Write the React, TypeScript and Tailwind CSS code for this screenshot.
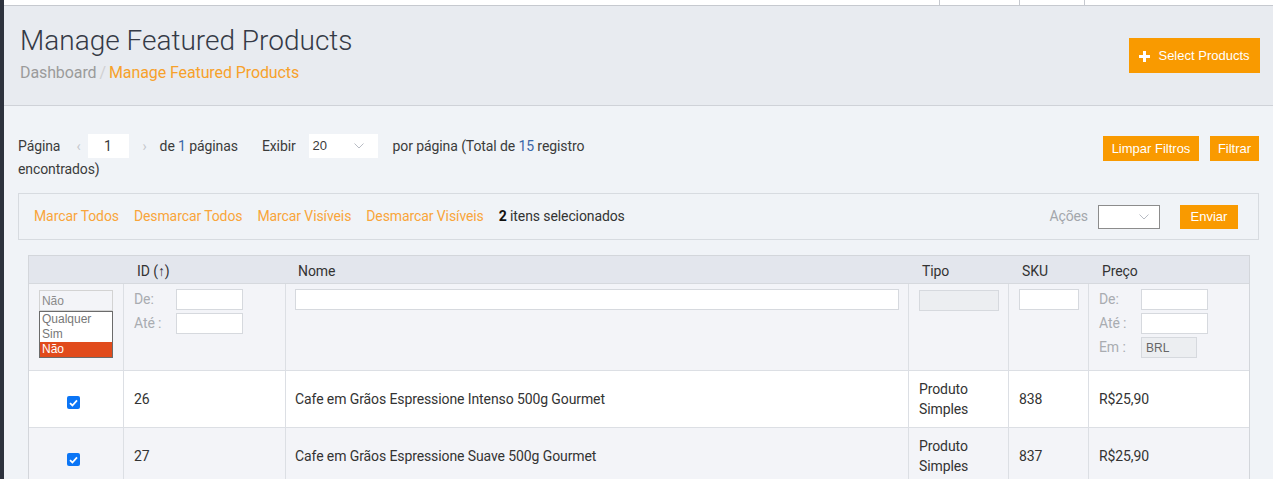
import React from "react";

const roboto = { fontFamily: "Roboto, 'Noto Sans', sans-serif" };
const arial = { fontFamily: "'Liberation Sans', Arial, sans-serif" };

function Chevron({ className = "" }: { className?: string }) {
  return (
    <svg width="10" height="6" viewBox="0 0 10 6" className={className}>
      <path d="M0.5 0.5 L5 5 L9.5 0.5" fill="none" stroke="#b8bcc4" strokeWidth="1" />
    </svg>
  );
}

function Checkbox() {
  return (
    <span className="inline-flex h-[13px] w-[13px] items-center justify-center rounded-[2px] bg-[#0b75f5]">
      <svg width="9" height="8" viewBox="0 0 9 8">
        <path d="M1 4.2 L3.4 6.5 L8 1.3" fill="none" stroke="#fff" strokeWidth="1.8" />
      </svg>
    </span>
  );
}

function Btn({ children, className = "" }: { children: React.ReactNode; className?: string }) {
  return (
    <div
      className={`flex items-center justify-center bg-[#f99a00] text-[13px] tracking-normal text-white ${className}`}
      style={arial}
    >
      {children}
    </div>
  );
}

const inputCls = "h-[21px] border border-[#d6d9de] bg-white";

export default function App() {
  const rows = [
    { id: "26", name: "Cafe em Grãos Espressione Intenso 500g Gourmet", sku: "838", bg: "bg-white" },
    { id: "27", name: "Cafe em Grãos Espressione Suave 500g Gourmet", sku: "837", bg: "bg-[#f3f4f8]" },
  ];
  return (
    <div className="flex h-[479px] w-[1273px] overflow-hidden bg-[#f0f3f7] tracking-[-0.1px] text-[#333]" style={roboto}>
      <div className="w-[4px] shrink-0 bg-[#2d323d]" />
      <div className="flex min-w-0 flex-1 flex-col">
        {/* top bar */}
        <div className="flex h-[6px] shrink-0 justify-end border-b border-[#c6c9cf] bg-white">
          <div className="w-[80px] border-l border-[#c6c9cf]" />
          <div className="w-[65px] border-l border-[#c6c9cf]" />
          <div className="w-[189px] border-l border-[#c6c9cf]" />
        </div>
        {/* header */}
        <div className="flex h-[100px] shrink-0 items-start justify-between border-b border-[#cfd2d8] bg-[#e8ebf0] pl-[16px] pr-[13px]">
          <div className="pt-[19px]">
            <h1 className="text-[28px] font-light leading-[32px] tracking-normal text-[#353a46]">Manage Featured Products</h1>
            <div className="mt-[6px] text-[16px] leading-[20px]">
              <span className="text-[#9b9b9b]">Dashboard</span>
              <span className="mx-[3px] text-[#d0d0d0]">/</span>
              <span className="text-[#f7a12b]">Manage Featured Products</span>
            </div>
          </div>
          <Btn className="mt-[32px] h-[35px] w-[131px] gap-[8px] pt-[1px]">
            <svg width="11" height="11" viewBox="0 0 11 11">
              <path d="M5.5 0 V11 M0 5.5 H11" stroke="#fff" strokeWidth="3" />
            </svg>
            <span>Select Products</span>
          </Btn>
        </div>
        {/* content */}
        <div className="flex flex-col px-[14px] pt-[28px]">
          <div className="flex items-start justify-between">
            <div className="w-[600px] text-[14px] leading-[22px] text-[#3b3b3b]">
              <span className="inline-flex items-center align-middle">
                <span>Página</span>
                <span className="ml-[16px] mr-[7px] text-[#c4c7cc]">‹</span>
                <span className="inline-flex h-[24px] w-[41px] items-center justify-center bg-white">1</span>
                <span className="ml-[14px] mr-[13px] text-[#c4c7cc]">›</span>
                <span>
                  de <span className="text-[#3a66a8]">1</span> páginas
                </span>
                <span className="ml-[24px]">Exibir</span>
                <span className="ml-[13px] inline-flex h-[24px] w-[69px] items-center justify-between bg-white pl-[4px] pr-[14px] text-[13px]" style={arial}>
                  <span>20</span>
                  <Chevron />
                </span>
                <span className="ml-[15px]">
                  por página (Total de <span className="text-[#3a66a8]">15</span> registro
                </span>
              </span>{" "}
              <span>encontrados)</span>
            </div>
            <div className="flex gap-[11px] pt-[2px]">
              <Btn className="h-[25px] w-[96px]">Limpar Filtros</Btn>
              <Btn className="h-[25px] w-[49px]">Filtrar</Btn>
            </div>
          </div>

          {/* mass action */}
          <div className="mt-[13px] flex h-[47px] items-center justify-between border border-[#d7dbe0] pl-[15px] pr-[20px] text-[14px]">
            <div className="flex items-center gap-[15px] tracking-[-0.1px] text-[#f9a53a]">
              <span>Marcar Todos</span>
              <span>Desmarcar Todos</span>
              <span>Marcar Visíveis</span>
              <span>Desmarcar Visíveis</span>
              <span className="text-[#333]">
                <b className="font-bold text-[#111]">2</b> itens selecionados
              </span>
            </div>
            <div className="flex items-center">
              <span className="text-[#a3a6ab]">Ações</span>
              <span className="ml-[10px] flex h-[24px] w-[62px] items-center justify-end border border-[#8c8c8c] bg-white pr-[10px]">
                <Chevron />
              </span>
              <Btn className="ml-[20px] h-[24px] w-[58px] text-[13px]">Enviar</Btn>
            </div>
          </div>

          {/* table */}
          <div className="ml-[10px] mr-[9px] mt-[15px] border-t border-l border-r border-[#d3d6db] text-[14px]">
            <div className="grid grid-cols-[94px_162px_623px_100px_80px_1fr]">
              {/* header */}
              <div className="h-[28px] bg-[#e3e6ed] border-b border-[#d6d9de]" />
              <div className="flex h-[28px] items-center bg-[#e3e6ed] pl-[14px] pt-[3px] border-b border-[#d6d9de] text-[#333]">
                ID (<span className="font-bold">↑</span>)
              </div>
              <div className="flex h-[28px] items-center bg-[#e3e6ed] pl-[13px] pt-[3px] border-b border-[#d6d9de]">Nome</div>
              <div className="flex h-[28px] items-center bg-[#e3e6ed] pl-[14px] pt-[3px] border-b border-[#d6d9de]">Tipo</div>
              <div className="flex h-[28px] items-center bg-[#e3e6ed] pl-[14px] pt-[3px] border-b border-[#d6d9de]">SKU</div>
              <div className="flex h-[28px] items-center bg-[#e3e6ed] pl-[14px] pt-[3px] border-b border-[#d6d9de]">Preço</div>

              {/* filters */}
              <div className="relative h-[86px] bg-[#f3f4f8] pl-[10px] pt-[6px]">
                <div className="flex h-[21px] w-[74px] items-center border border-[#d3d3d3] pl-[2px] text-[12px] text-[#8a8a8a]" style={arial}>
                  Não
                </div>
                <div className="absolute left-[10px] top-[27px] w-[74px] border border-[#6b6b6b] bg-white text-[12px] leading-[15px] tracking-normal text-[#777]" style={arial}>
                  <div className="pl-[2px]">Qualquer</div>
                  <div className="pl-[2px]">Sim</div>
                  <div className="bg-[#e14b1c] pl-[2px] text-white">Não</div>
                </div>
              </div>
              <div className="h-[86px] border-l border-[#dcdfe4] bg-[#f3f4f8] pl-[10px] pt-[5px] text-[#a9acb1]">
                <div className="flex items-center">
                  <span className="w-[42px]">De:</span>
                  <span className={`${inputCls} w-[67px]`} />
                </div>
                <div className="mt-[3px] flex items-center">
                  <span className="w-[42px]">Até :</span>
                  <span className={`${inputCls} w-[67px]`} />
                </div>
              </div>
              <div className="h-[86px] border-l border-[#dcdfe4] bg-[#f3f4f8] pl-[9px] pr-[9px] pt-[5px]">
                <div className={`${inputCls} w-full`} />
              </div>
              <div className="h-[86px] border-l border-[#dcdfe4] bg-[#f3f4f8] pl-[10px] pr-[9px] pt-[6px]">
                <div className="h-[21px] w-full border border-[#d6d9de] bg-[#eceef1]" />
              </div>
              <div className="h-[86px] border-l border-[#dcdfe4] bg-[#f3f4f8] pl-[10px] pr-[9px] pt-[5px]">
                <div className={`${inputCls} w-full`} />
              </div>
              <div className="h-[86px] border-l border-[#dcdfe4] bg-[#f3f4f8] pl-[10px] pt-[5px] text-[#a9acb1]">
                <div className="flex items-center">
                  <span className="w-[42px]">De:</span>
                  <span className={`${inputCls} w-[67px]`} />
                </div>
                <div className="mt-[3px] flex items-center">
                  <span className="w-[42px]">Até :</span>
                  <span className={`${inputCls} w-[67px]`} />
                </div>
                <div className="mt-[3px] flex items-center">
                  <span className="w-[42px]">Em :</span>
                  <span className="flex h-[21px] w-[56px] items-center border border-[#d6d9de] bg-[#eceef1] pl-[4px] text-[12px] tracking-normal text-[#666]" style={arial}>
                    BRL
                  </span>
                </div>
              </div>

              {rows.map((r) => (
                <React.Fragment key={r.id}>
                  <div className={`flex h-[57px] items-center justify-center border-t border-[#dcdfe4] pr-[5px] pt-[7px] ${r.bg}`}>
                    <Checkbox />
                  </div>
                  <div className={`flex h-[57px] items-center border-t border-l border-[#dcdfe4] pl-[10px] ${r.bg}`}>{r.id}</div>
                  <div className={`flex h-[57px] items-center border-t border-l border-[#dcdfe4] pl-[9px] ${r.bg}`}>{r.name}</div>
                  <div className={`flex h-[57px] items-center border-t border-l border-[#dcdfe4] pl-[10px] leading-[20px] ${r.bg}`}>
                    Produto
                    <br />
                    Simples
                  </div>
                  <div className={`flex h-[57px] items-center border-t border-l border-[#dcdfe4] pl-[10px] ${r.bg}`}>{r.sku}</div>
                  <div className={`flex h-[57px] items-center border-t border-l border-[#dcdfe4] pl-[10px] ${r.bg}`}>R$25,90</div>
                </React.Fragment>
              ))}
            </div>
          </div>
        </div>
      </div>
    </div>
  );
}
